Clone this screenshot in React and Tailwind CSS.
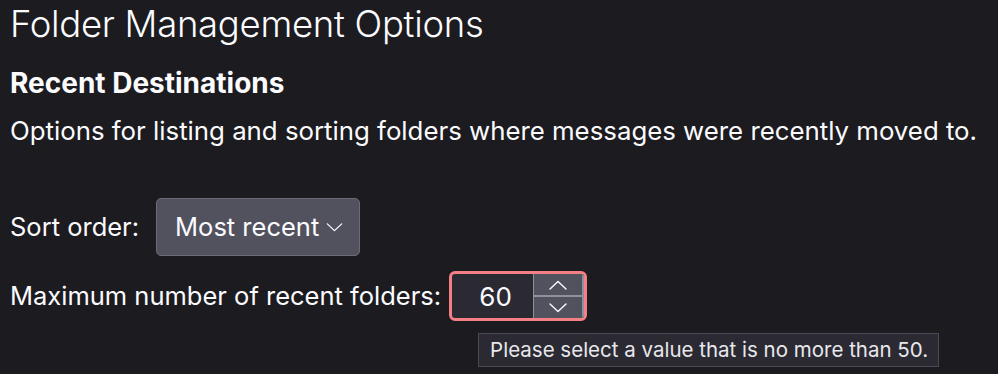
function Chevron({ up = false, className = "" }) {
  return (
    <svg viewBox="0 0 18 10" className={className} fill="none" stroke="currentColor" strokeWidth="1.4" strokeLinecap="round" strokeLinejoin="round">
      {up ? <polyline points="1,9 9,1.5 17,9" /> : <polyline points="1,1 9,8.5 17,1" />}
    </svg>
  );
}

function App() {
  return (
    <div
      className="w-[998px] h-[374px] bg-[#1c1b20] text-[#fbfbfe] overflow-hidden"
      style={{ fontFamily: "Inter, 'Noto Sans', sans-serif" }}
    >
      <div className="pl-[10px]">
        <h1 className="text-[36.5px] font-light leading-[48px] tracking-[-0.3px]">
          Folder Management Options
        </h1>
        <h2 className="text-[28px] font-bold leading-[34px] mt-[18px]">Recent Destinations</h2>
        <p className="text-[25.8px] leading-[32px] mt-[15px]">
          Options for listing and sorting folders where messages were recently moved to.
        </p>

        {/* Sort order */}
        <div className="flex items-center gap-[17px] mt-[51px]">
          <span className="text-[25.5px]">Sort order:</span>
          <div className="flex items-center gap-[7px] h-[58px] w-[204px] pl-[18px] bg-[#52525e] border border-[#6b6b75] rounded-[5px]">
            <span className="text-[25.5px]">Most recent</span>
            <Chevron className="w-[17px] h-[9px]" />
          </div>
        </div>

        {/* Max folders */}
        <div className="flex items-center gap-[8px] mt-[15px]">
          <span className="text-[25.5px]">Maximum number of recent folders:</span>
          <div className="relative">
            <div className="flex h-[50px] w-[138px] border-[3px] border-[#f47f85] rounded-[6px] overflow-hidden bg-[#2b2a33]">
              <div className="flex-1 flex items-center justify-center text-[26px] pl-[6px]">60</div>
              <div className="w-[51px] flex flex-col bg-[#52525e] border-l border-r-[2px] border-[#8f8f9d]">
                <div className="flex-1 flex items-center justify-center border-b-[2px] border-[#8f8f9d]">
                  <Chevron up className="w-[18px] h-[10px]" />
                </div>
                <div className="flex-1 flex items-center justify-center">
                  <Chevron className="w-[18px] h-[10px]" />
                </div>
              </div>
            </div>
            <div className="absolute left-[29px] top-[62px] whitespace-nowrap bg-[#2b2a33] border border-[#4a4a55] pl-[11px] pr-[10px] h-[34px] flex items-center text-[20.5px] text-[#e8e8ec]">
              Please select a value that is no more than 50.
            </div>
          </div>
        </div>
      </div>
    </div>
  );
}

export default App;
